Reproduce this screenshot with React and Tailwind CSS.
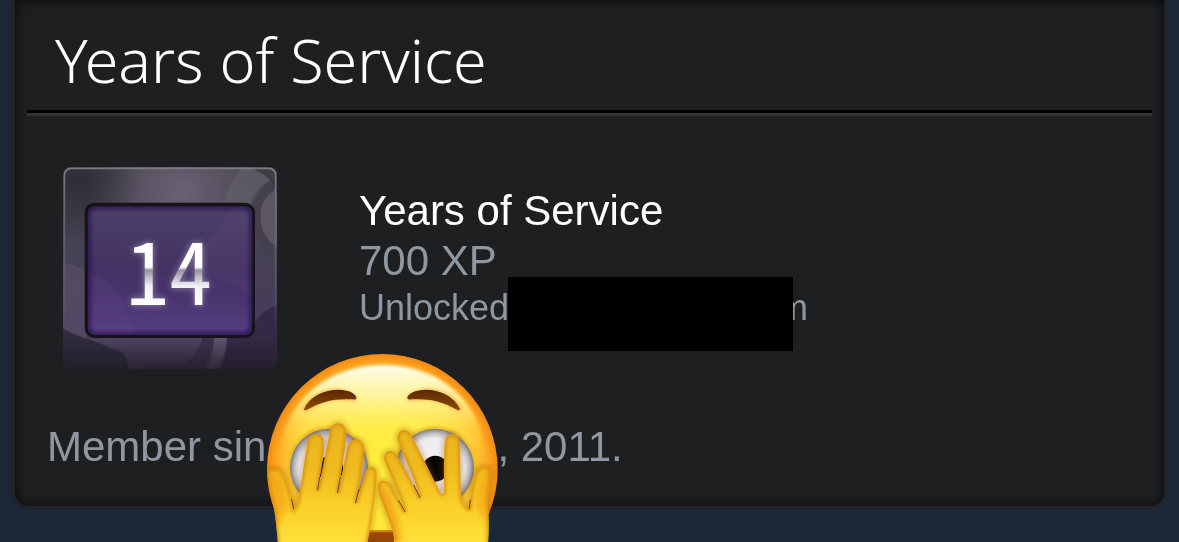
const ARIAL = "font-['Liberation_Sans',Arial,sans-serif]"
const DIGITS = "font-['Noto_Sans_Mono_CJK_JP','Noto_Sans_CJK_JP',sans-serif]"

function BadgeArt() {
  return (
    <svg viewBox="38 50 642 606" className="block w-[214px] h-[202px] shrink-0" role="img" aria-label="14 years badge">
      <defs>
        <linearGradient id="frame" x1="0" y1="0" x2="0" y2="1">
          <stop offset="0" stopColor="#45414c" />
          <stop offset="0.45" stopColor="#474155" />
          <stop offset="0.8" stopColor="#463c5b" />
          <stop offset="1" stopColor="#292432" />
        </linearGradient>
        <radialGradient id="frameGlow" cx="0.55" cy="0.13" r="0.45">
          <stop offset="0" stopColor="#756d80" stopOpacity="0.75" />
          <stop offset="1" stopColor="#756d80" stopOpacity="0" />
        </radialGradient>
        <radialGradient id="frameDark" cx="0.07" cy="0.06" r="0.3">
          <stop offset="0" stopColor="#29272e" stopOpacity="0.8" />
          <stop offset="1" stopColor="#29272e" stopOpacity="0" />
        </radialGradient>
        <linearGradient id="frameFoot" x1="0" y1="0" x2="0" y2="1">
          <stop offset="0.84" stopColor="#201c29" stopOpacity="0" />
          <stop offset="1" stopColor="#201c29" stopOpacity="0.75" />
        </linearGradient>
        <linearGradient id="rim" x1="0" y1="0" x2="0" y2="1">
          <stop offset="0" stopColor="#7d7a83" />
          <stop offset="0.6" stopColor="#65606c" stopOpacity="0.5" />
          <stop offset="0.85" stopColor="#65606c" stopOpacity="0" />
        </linearGradient>
        <linearGradient id="screen" x1="0" y1="0" x2="0" y2="1">
          <stop offset="0" stopColor="#4b4068" />
          <stop offset="0.5" stopColor="#433163" />
          <stop offset="0.75" stopColor="#4a3570" />
          <stop offset="1" stopColor="#563f80" />
        </linearGradient>
        <linearGradient id="digits" gradientUnits="userSpaceOnUse" x1="0" y1="266" x2="0" y2="466">
          <stop offset="0" stopColor="#fff" />
          <stop offset="0.42" stopColor="#fff" />
          <stop offset="0.47" stopColor="#96929e" />
          <stop offset="0.7" stopColor="#f0eff3" />
          <stop offset="1" stopColor="#fff" />
        </linearGradient>
        <filter id="digitGlow" x="-30%" y="-30%" width="160%" height="160%">
          <feGaussianBlur stdDeviation="11" />
        </filter>
        <filter id="screenEdge" x="-10%" y="-10%" width="120%" height="120%">
          <feGaussianBlur stdDeviation="8" />
        </filter>
        <filter id="shapeSoft" x="-10%" y="-10%" width="120%" height="120%">
          <feGaussianBlur stdDeviation="2" />
        </filter>
        <clipPath id="frameClip">
          <rect x="38" y="50" width="642" height="606" rx="22" />
        </clipPath>
        <clipPath id="screenClip">
          <rect x="112" y="168" width="494" height="386" rx="22" />
        </clipPath>
      </defs>
      <g clipPath="url(#frameClip)">
        <rect x="38" y="50" width="642" height="606" fill="url(#frame)" />
        <g filter="url(#shapeSoft)">
          <path d="M38 335L110 358V570L38 535Z" fill="#5a526b" opacity="0.6" />
          <path d="M38 535C100 570 160 575 212 605L235 656H38Z" fill="#2e293b" opacity="0.85" />
          <path d="M212 605C225 610 230 630 235 656H500L540 560H200C170 566 140 560 110 564Z" fill="#5d526e" opacity="0.6" />
          <path d="M262 628C310 650 400 665 435 610C450 590 455 575 455 560H492C490 605 470 640 455 656H300Z" fill="#3c334f" />
          <path d="M490 560H530C530 600 520 630 510 656H470C485 630 492 600 490 560Z" fill="#6a6278" opacity="0.6" />
          <path d="M680 465C640 480 615 500 600 560H530C530 600 520 630 510 656H680Z" fill="#342b44" />
        </g>
        <rect x="38" y="50" width="642" height="606" fill="url(#frameGlow)" />
        <g filter="url(#shapeSoft)">
          <path d="M524 160C530 110 550 75 580 50H680V82C640 95 615 120 600 160Z" fill="#66636b" opacity="0.6" />
          <path d="M680 85C630 110 600 150 604 200C606 260 640 310 680 335V290C645 270 628 230 630 190C632 155 650 130 680 115Z" fill="#443f4d" />
          <path d="M680 115C650 130 632 155 630 190C628 230 645 270 680 290Z" fill="#5b5664" />
          <path d="M590 50H680V130C670 90 640 65 590 50Z" fill="#343238" opacity="0.65" />
        </g>
        <rect x="38" y="50" width="642" height="606" fill="url(#frameDark)" />
        <rect x="38" y="50" width="642" height="606" fill="url(#frameFoot)" />
      </g>
      <rect x="42" y="54" width="634" height="598" rx="20" fill="none" stroke="url(#rim)" strokeWidth="5" />
      <rect x="103" y="157" width="511" height="406" rx="30" fill="#141317" />
      <g clipPath="url(#screenClip)">
        <rect x="112" y="168" width="494" height="386" fill="url(#screen)" />
        <path d="M606 168H540C520 240 450 270 440 350C500 400 560 390 606 440Z" fill="#685a85" opacity="0.16" />
        <path d="M112 370C190 385 220 430 250 554H112Z" fill="#6a4d93" opacity="0.2" />
        <rect x="110" y="166" width="498" height="390" rx="24" fill="none" stroke="#211048" strokeWidth="16" filter="url(#screenEdge)" />
      </g>
      <text x="356" y="463" textAnchor="middle" fontSize="260" fill="#c5bdd8" opacity="0.6" filter="url(#digitGlow)" className={DIGITS}>14</text>
      <text x="356" y="463" textAnchor="middle" fontSize="260" fill="url(#digits)" className={DIGITS}>14</text>
    </svg>
  )
}

const LEFT_HAND =
  'M70 620C66 580 64 550 58 510C50 470 40 440 38 405C38 380 70 380 82 398C98 425 108 465 116 508C122 500 126 494 130 482C140 430 148 360 158 304C164 274 206 276 207 306C208 350 194 405 188 452C202 400 215 320 226 272C230 242 272 242 273 274C272 330 258 400 248 460C260 420 268 360 279 318C286 290 326 292 326 324C326 380 312 440 302 490C314 460 322 425 331 398C338 374 364 376 365 402C364 460 356 500 350 535C346 565 340 595 334 620Z'
const RIGHT_HAND =
  'M420 620C418 580 408 555 396 525C384 490 370 465 368 442C369 416 396 418 406 434C422 462 434 490 450 517C438 460 402 400 388 360C384 330 414 324 426 346C450 385 474 430 495 475C480 410 442 345 428 298C424 268 456 262 468 284C500 345 528 405 558 460C564 464 567 461 568 454C566 400 566 350 570 304C574 276 610 276 613 304C618 360 614 420 619 470C624 492 632 506 643 508C648 475 650 430 662 398C674 374 708 372 707 402C706 430 696 460 699 500C702 545 702 580 698 620Z'

function PeekingFace() {
  return (
    <svg viewBox="0 0 780 606" className="absolute -left-[11px] -top-[82px] w-[260px] h-[202px] max-w-none" role="img" aria-label="Face peeking through fingers">
      <defs>
        <radialGradient id="face" gradientUnits="userSpaceOnUse" cx="382" cy="388" r="346">
          <stop offset="0" stopColor="#fff03a" />
          <stop offset="0.5" stopColor="#ffe63c" />
          <stop offset="0.76" stopColor="#ffcf38" />
          <stop offset="0.9" stopColor="#ffaf25" />
          <stop offset="1" stopColor="#f48a12" />
        </radialGradient>
        <linearGradient id="shine" x1="0" y1="0" x2="0" y2="1">
          <stop offset="0" stopColor="#fffdec" />
          <stop offset="0.3" stopColor="#fff8a8" stopOpacity="0.85" />
          <stop offset="0.6" stopColor="#fff35a" stopOpacity="0.3" />
          <stop offset="0.85" stopColor="#fff04a" stopOpacity="0" />
        </linearGradient>
        <radialGradient id="eye">
          <stop offset="0" stopColor="#f6f3f7" />
          <stop offset="0.76" stopColor="#eeebef" />
          <stop offset="0.9" stopColor="#b5b4b9" />
          <stop offset="1" stopColor="#77777a" />
        </radialGradient>
        <linearGradient id="brow" x1="0" y1="0" x2="0" y2="1">
          <stop offset="0" stopColor="#5b2700" />
          <stop offset="1" stopColor="#8d4c02" />
        </linearGradient>
        <linearGradient id="hand" gradientUnits="userSpaceOnUse" x1="0" y1="250" x2="0" y2="606">
          <stop offset="0" stopColor="#e9b41f" />
          <stop offset="0.4" stopColor="#efbc1f" />
          <stop offset="0.7" stopColor="#fad02a" />
          <stop offset="1" stopColor="#ffdf38" />
        </linearGradient>
        <filter id="soft" x="-20%" y="-20%" width="140%" height="140%">
          <feGaussianBlur stdDeviation="8" />
        </filter>
        <filter id="softSmall" x="-20%" y="-20%" width="140%" height="140%">
          <feGaussianBlur stdDeviation="4" />
        </filter>
        <clipPath id="faceClip">
          <circle cx="382" cy="388" r="346" />
        </clipPath>
        <clipPath id="leftHandClip">
          <path d={LEFT_HAND} />
        </clipPath>
        <clipPath id="rightHandClip">
          <path d={RIGHT_HAND} />
        </clipPath>
      </defs>

      <circle cx="382" cy="388" r="346" fill="url(#face)" />
      <path d="M78 340C90 180 220 75 385 75C550 75 676 180 690 340C640 430 130 430 78 340Z" fill="url(#shine)" filter="url(#softSmall)" />

      <g fill="#e99a12" opacity="0.5" filter="url(#softSmall)">
        <path d="M140 205C180 135 270 130 308 172L300 186C240 174 190 190 152 216Z" />
        <path d="M622 205C582 135 492 130 454 172L462 186C522 174 572 190 610 216Z" />
      </g>
      <path d="M147 207C168 160 230 142 274 152C294 156 304 166 304 174C303 179 298 179 290 178C240 175 202 183 154 210Q148 212 147 207Z" fill="url(#brow)" />
      <path d="M615 207C594 160 532 142 488 152C468 156 457 166 457 174C458 179 464 179 472 178C522 175 560 183 608 210Q614 212 615 207Z" fill="url(#brow)" />

      <g fill="none" stroke="#e8b01c" strokeWidth="7" filter="url(#softSmall)">
        <circle cx="222" cy="383" r="119" />
        <circle cx="540" cy="383" r="119" />
      </g>
      <circle cx="222" cy="383" r="117" fill="url(#eye)" />
      <circle cx="540" cy="383" r="117" fill="url(#eye)" />
      <circle cx="226" cy="386" r="39" fill="#080604" />
      <circle cx="541" cy="386" r="39" fill="#080604" />

      <path d="M335 572H417V610H335Z" fill="#974508" />
      <path d="M338 574H415" stroke="#d8820d" strokeWidth="6" />

      <g clipPath="url(#faceClip)" opacity="0.4">
        <path d={LEFT_HAND} fill="none" stroke="#985008" strokeWidth="12" filter="url(#soft)" />
        <path d={RIGHT_HAND} fill="none" stroke="#985008" strokeWidth="12" filter="url(#soft)" />
      </g>

      <path d={LEFT_HAND} fill="url(#hand)" />
      <g clipPath="url(#leftHandClip)">
        <path d="M38 380C60 390 90 430 100 500L66 560L30 480Z" fill="#f78d10" opacity="0.45" filter="url(#soft)" />
        <path d={LEFT_HAND} fill="none" stroke="#d08508" strokeWidth="12" opacity="0.7" filter="url(#softSmall)" />
      </g>
      <path d={RIGHT_HAND} fill="url(#hand)" />
      <g clipPath="url(#rightHandClip)">
        <path d="M365 420C400 450 430 500 440 606H400C410 560 380 500 365 470Z" fill="#f19412" opacity="0.6" filter="url(#soft)" />
        <path d="M710 380C680 400 670 440 660 500L700 560Z" fill="#f78d10" opacity="0.4" filter="url(#soft)" />
        <path d={RIGHT_HAND} fill="none" stroke="#d08508" strokeWidth="12" opacity="0.7" filter="url(#softSmall)" />
      </g>
      <g fill="none" stroke="#7c3c04" strokeWidth="3" strokeLinecap="round">
        <path d="M116 506L110 478M188 450L194 412M248 458L256 412M302 488L311 450" />
        <path d="M450 515L431 482M495 473L477 436M643 506L646 480" />
      </g>
    </svg>
  )
}

export default function App() {
  return (
    <main className={`min-h-screen bg-[#1b2838] px-3 text-[#8f98a0] ${ARIAL}`}>
      <section className="rounded-b-2xl border-3 border-t-0 border-[#222326] bg-[#1e1f21] shadow-[inset_0_0_12px_#080808]">
        <h1 className="pt-7 pb-[18px] pl-10 font-['Noto_Sans','Open_Sans',sans-serif] text-[61px] leading-[64px] font-light text-white">
          Years of Service
        </h1>
        <div className="mx-3 h-[6px] border-t-3 border-b-3 border-t-black border-b-[#353233]" />

        <div className="flex items-start gap-[82px] pt-[51px] pl-12">
          <BadgeArt />
          <div className="pt-[19px] whitespace-nowrap">
            <h2 className="text-[42px] leading-[50px] text-white">Years of Service</h2>
            <p className="text-[42px] leading-[50px]">700 XP</p>
            <p className="flex text-[36px] leading-[44px]">
              <span>Unlocked</span>
              <span className="relative w-[269px]">
                <span className="absolute -top-[9px] -left-px h-[74px] w-[285px] bg-black" />
              </span>
              <span>m</span>
            </p>
          </div>
        </div>

        <p className="mt-[53px] flex pb-[34px] pl-8 text-[42px] leading-[50px] whitespace-nowrap">
          <span>Member sin</span>
          <span className="relative w-[231px]">
            <PeekingFace />
          </span>
          <span>, 2011.</span>
        </p>
      </section>
    </main>
  )
}
